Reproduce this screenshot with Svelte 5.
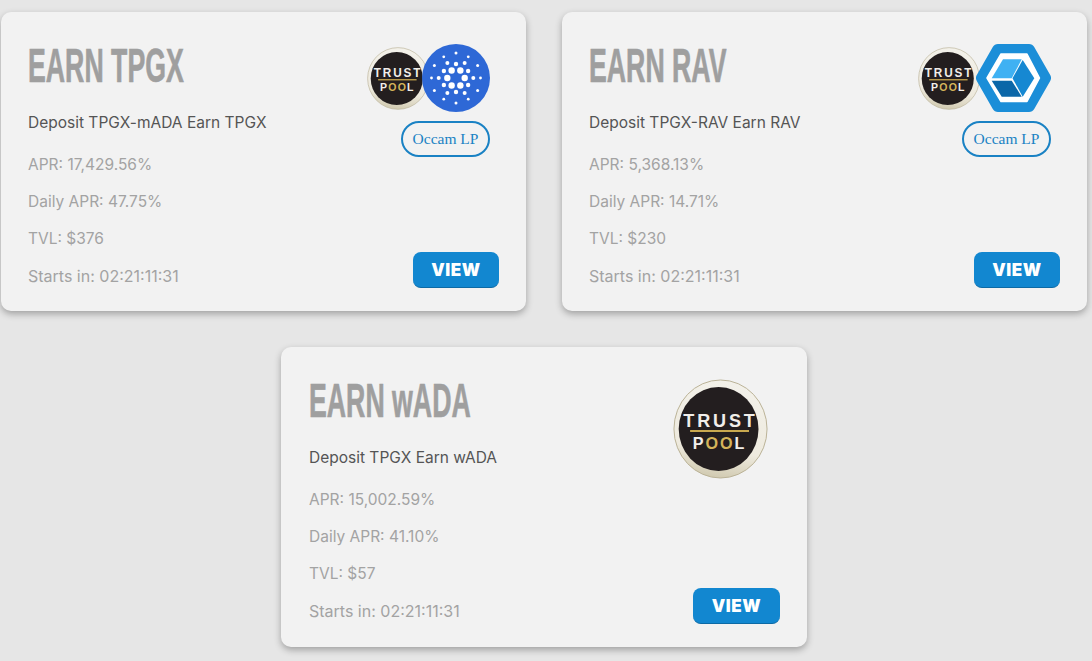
<script>
  const cards = [
    { title: 'EARN TPGX', desc: 'Deposit TPGX-mADA Earn TPGX', apr: '17,429.56%', daily: '47.75%', tvl: '$376', pair: 'ada', lp: true },
    { title: 'EARN RAV', desc: 'Deposit TPGX-RAV Earn RAV', apr: '5,368.13%', daily: '14.71%', tvl: '$230', pair: 'rav', lp: true },
    { title: 'EARN wADA', desc: 'Deposit TPGX Earn wADA', apr: '15,002.59%', daily: '41.10%', tvl: '$57', pair: null, lp: false }
  ];
  const rings = [
    [0, 8.7, 3.2], [30, 14, 2.2], [0, 17.3, 2], [30, 25, 1.5], [0, 24.5, 1.4]
  ];
  const dots = rings.flatMap(([start, dist, r]) =>
    [0, 1, 2, 3, 4, 5].map((k) => {
      const a = ((start + k * 60) * Math.PI) / 180;
      return { x: 34 + dist * Math.cos(a), y: 34 + dist * Math.sin(a), r };
    })
  );
</script>

{#snippet trust(cls)}
  <svg class={cls} viewBox="0 0 100 100" preserveAspectRatio="none" aria-label="Trust Pool">
    <defs>
      <linearGradient id="rim" x1="0.5" y1="0" x2="0.35" y2="1">
        <stop offset="0" stop-color="#f3f1ea" />
        <stop offset="0.7" stop-color="#eeeade" />
        <stop offset="1" stop-color="#cfc8ae" />
      </linearGradient>
    </defs>
    <circle cx="50" cy="50" r="49" fill="url(#rim)" stroke="#b9b195" stroke-width="1" />
    <circle cx="48" cy="50" r="42" fill="#231e1f" />
    <text x="50" y="48" class="t1">TRUST</text>
    <rect x="18" y="51" width="62" height="2" fill="#c9a94f" />
    <text x="49" y="70" class="t2">P<tspan fill="#d4b45a">OO</tspan>L</text>
  </svg>
{/snippet}

<main class="page">
  {#each cards as c}
    <section class="card">
      <div class="info">
        <h2>{c.title}</h2>
        <p class="desc">{c.desc}</p>
        <p class="stat">APR: {c.apr}</p>
        <p class="stat">Daily APR: {c.daily}</p>
        <p class="stat">TVL: {c.tvl}</p>
        <p class="stat last">Starts in: 02:21:11:31</p>
      </div>
      <div class="side">
        <div class="top">
          {#if c.pair}
            <div class="logos">
              {@render trust('small')}
              {#if c.pair === 'ada'}
                <svg class="partner ada" viewBox="0 0 68 68" aria-label="Cardano">
                  <circle cx="34" cy="34" r="34" fill="#2e68d6" />
                  {#each dots as d}
                    <circle cx={d.x} cy={d.y} r={d.r} fill="#fff" />
                  {/each}
                </svg>
              {:else}
                <svg class="partner rav" viewBox="0 0 75 68" aria-label="Rav">
                  <path d="M22 6H53L69 34L53 62H22L6 34Z" fill="#1b8ed8" stroke="#1b8ed8" stroke-width="12" stroke-linejoin="round" />
                  <path d="M25 10H51L63.5 34L51 57.5H25L11 34Z" fill="#fff" stroke="#fff" stroke-width="1.5" stroke-linejoin="round" />
                  <path d="M15.7 34.3L27 15.3H45.7L35.7 34.3Z" fill="#3fb1f3" />
                  <path d="M36.5 34.3L46.7 16L58.3 34.3L46.7 52.7Z" fill="#1688d2" />
                  <path d="M15.7 36.7H35.7L45.7 52.7H25.7Z" fill="#0b67a8" />
                </svg>
              {/if}
            </div>
            {#if c.lp}
              <span class="badge">Occam LP</span>
            {/if}
          {:else}
            {@render trust('large')}
          {/if}
        </div>
        <button class="view">VIEW</button>
      </div>
    </section>
  {/each}
</main>

<style>
  :global(body) {
    margin: 0;
    background: #e6e6e6;
  }
  .page {
    width: 1088px;
    box-sizing: border-box;
    padding-top: 12px;
    padding-bottom: 14px;
    display: flex;
    flex-wrap: wrap;
    justify-content: center;
    gap: 36px;
    font-family: Inter, "Liberation Sans", sans-serif;
  }
  .card {
    width: 525px;
    height: 299px;
    box-sizing: border-box;
    padding: 29px 27px 23px 27px;
    background: #f2f2f2;
    border-radius: 10px;
    box-shadow: 0 3px 7px rgba(0, 0, 0, 0.3);
    display: flex;
    justify-content: space-between;
  }
  .card:last-child {
    width: 526px;
    height: 300px;
    padding-left: 28px;
  }
  .card:last-child .view {
    width: 87px;
  }
  .info {
    display: flex;
    flex-direction: column;
  }
  h2 {
    margin: 0 0 23px;
    font: 700 49px/48px "Liberation Sans", sans-serif;
    color: #9f9f9f;
    white-space: nowrap;
    transform: scaleX(0.545);
    transform-origin: left center;
    -webkit-text-stroke: 0.7px #9f9f9f;
  }
  .desc {
    margin: 0 0 20px;
    font-size: 15.5px;
    line-height: 22px;
    color: #555;
  }
  .stat {
    margin: 0 0 15px;
    font-size: 15.5px;
    line-height: 22px;
    color: #a3a3a3;
  }
  .last {
    font-size: 16px;
  }
  .side {
    display: flex;
    flex-direction: column;
    align-items: flex-end;
    justify-content: space-between;
  }
  .top {
    display: flex;
    flex-direction: column;
    align-items: flex-end;
    padding-right: 9px;
    margin-top: 3px;
  }
  .logos {
    display: flex;
    align-items: center;
    height: 68px;
  }
  .small {
    width: 62px;
    height: 63px;
    margin-right: -7px;
    margin-top: 1px;
  }
  .partner {
    position: relative;
    display: block;
    height: 68px;
  }
  .ada { width: 68px; }
  .rav { width: 75px; margin-left: 3px; }
  .large {
    width: 95px;
    height: 100px;
    margin-right: 3px;
  }
  .badge {
    box-sizing: border-box;
    margin-top: 9px;
    width: 89px;
    height: 36px;
    display: flex;
    align-items: center;
    justify-content: center;
    border: 2px solid #1a82c4;
    border-radius: 18px;
    font: 15.5px "Liberation Serif", serif;
    color: #1a82c4;
  }
  .view {
    width: 86px;
    height: 36px;
    border: 0;
    border-bottom: 1px solid #0d6aa5;
    border-radius: 8px;
    background: #1287d0;
    color: #fff;
    font: 900 17px Inter, sans-serif;
    letter-spacing: 0.6px;
    padding: 0;
  }
  .t1, .t2 {
    fill: #f1eeea;
    font-family: "Liberation Sans", sans-serif;
    font-weight: 700;
    text-anchor: middle;
  }
  .t1 { font-size: 19px; letter-spacing: 3px; }
  .t2 { font-size: 17px; letter-spacing: 2px; }
</style>
